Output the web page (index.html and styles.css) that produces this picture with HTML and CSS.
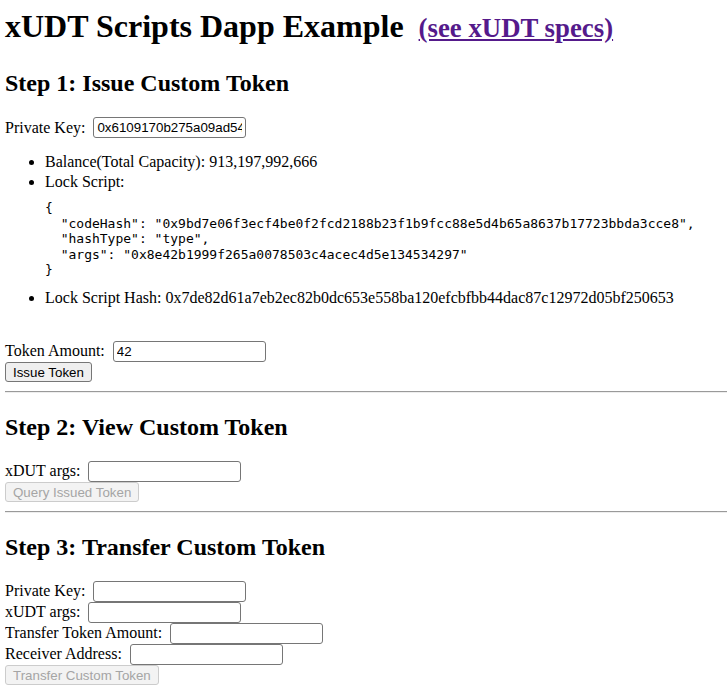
FILE: index.html
```html
<!DOCTYPE html>
<html>
<head>
<meta charset="utf-8">
<title>xUDT Scripts Dapp Example</title>
<link rel="stylesheet" href="styles.css">
</head>
<body>
<h1 class="title">xUDT Scripts Dapp Example <a class="spec-link" href="#">(see xUDT specs)</a></h1>

<h2 class="step">Step 1: Issue Custom Token</h2>
<div class="row"><span>Private Key:</span><input class="field" type="text" value="0x6109170b275a09ad54dea2ae6a9fd4b3ad6e1f7a3a34e3e0c0e8ee7d5e5c9a2b"></div>
<ul class="info">
  <li>Balance(Total Capacity): 913,197,992,666</li>
  <li>Lock Script:
<pre class="code">{
  "codeHash": "0x9bd7e06f3ecf4be0f2fcd2188b23f1b9fcc88e5d4b65a8637b17723bbda3cce8",
  "hashType": "type",
  "args": "0x8e42b1999f265a0078503c4acec4d5e134534297"
}</pre>
  </li>
  <li>Lock Script Hash: 0x7de82d61a7eb2ec82b0dc653e558ba120efcbfbb44dac87c12972d05bf250653</li>
</ul>
<div class="row row-gap"><span>Token Amount:</span><input class="field" type="text" value="42"></div>
<div class="row"><button class="btn" type="button">Issue Token</button></div>
<hr class="rule">

<h2 class="step">Step 2: View Custom Token</h2>
<div class="row"><span>xDUT args:</span><input class="field" type="text"></div>
<div class="row"><button class="btn" type="button" disabled>Query Issued Token</button></div>
<hr class="rule">

<h2 class="step">Step 3: Transfer Custom Token</h2>
<div class="row"><span>Private Key:</span><input class="field" type="text"></div>
<div class="row"><span>xUDT args:</span><input class="field" type="text"></div>
<div class="row"><span>Transfer Token Amount:</span><input class="field" type="text"></div>
<div class="row"><span>Receiver Address:</span><input class="field" type="text"></div>
<div class="row"><button class="btn" type="button" disabled>Transfer Custom Token</button></div>
</body>
</html>
```

FILE: styles.css
```css
html, body {
  background: #ffffff;
}
body {
  margin: 8px 0 0 5px;
  font-family: "Liberation Serif", "Times New Roman", serif;
  font-size: 16px;
  color: #000000;
}
.title {
  font-size: 32px;
  font-weight: bold;
  margin: 0 0 25px 0;
}
.spec-link {
  font-size: 26.8px;
  color: #551a8b;
  margin-left: 7px;
}
.step {
  font-size: 24px;
  font-weight: bold;
  margin: 21px 0 20px;
}
.row {
  display: flex;
  align-items: center;
  gap: 8px;
  height: 21px;
  line-height: 18px;
}
.field {
  font-family: "Liberation Sans", Arial, sans-serif;
  font-size: 13.33px;
  width: 153px;
  height: 21px;
  padding: 0 3px;
  margin: 0;
  border: 1px solid #767676;
  border-radius: 3px;
  box-sizing: border-box;
  color: #000;
  background: #fff;
}
.info {
  margin: 14px 0 16px;
  padding-left: 40px;
  line-height: 20px;
}
.code {
  font-family: "DejaVu Sans Mono", Menlo, monospace;
  font-size: 13px;
  line-height: 15.5px;
  margin: 8px 0 10px;
}
.row-gap {
  margin-top: 33px;
}
.btn {
  font-family: "Liberation Sans", Arial, sans-serif;
  font-size: 13.33px;
  color: #000;
  background: #efefef;
  border: 1px solid #767676;
  border-radius: 3px;
  padding: 0 7px;
  height: 20px;
  margin: 0;
}
.btn:disabled {
  color: #a5a5a5;
  background: #f3f3f3;
  border-color: #cccccc;
}
.rule {
  margin: 8px 0;
  border: 0;
  border-top: 1px solid #9a9a9a;
  border-bottom: 1px solid #eeeeee;
}
```
